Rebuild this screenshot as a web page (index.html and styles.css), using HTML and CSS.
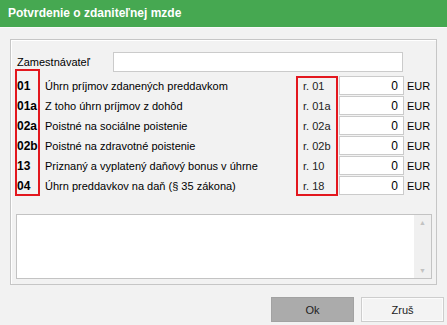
FILE: index.html
```html
<!DOCTYPE html>
<html lang="sk">
<head>
  <meta charset="UTF-8" />
  <title>Potvrdenie o zdaniteľnej mzde</title>
  <link rel="stylesheet" href="styles.css">
</head>
<body>
  <div class="titlebar">Potvrdenie o zdaniteľnej mzde</div>

  <div class="panel">
    <div class="employer">
      <label class="employer-label">Zamestnávateľ</label>
      <div class="field employer-field"></div>
    </div>

    <div class="table">
      <div class="codes marked">
        <div class="row">01</div>
        <div class="row">01a</div>
        <div class="row">02a</div>
        <div class="row">02b</div>
        <div class="row">13</div>
        <div class="row">04</div>
      </div>
      <div class="descs">
        <div class="row">Úhrn príjmov zdanených preddavkom</div>
        <div class="row">Z toho úhrn príjmov z dohôd</div>
        <div class="row">Poistné na sociálne poistenie</div>
        <div class="row">Poistné na zdravotné poistenie</div>
        <div class="row">Priznaný a vyplatený daňový bonus v úhrne</div>
        <div class="row">Úhrn preddavkov na daň (§ 35 zákona)</div>
      </div>
      <div class="refs marked">
        <div class="row">r. 01</div>
        <div class="row">r. 01a</div>
        <div class="row">r. 02a</div>
        <div class="row">r. 02b</div>
        <div class="row">r. 10</div>
        <div class="row">r. 18</div>
      </div>
      <div class="values">
        <div class="field value">0</div>
        <div class="field value">0</div>
        <div class="field value">0</div>
        <div class="field value">0</div>
        <div class="field value">0</div>
        <div class="field value">0</div>
      </div>
      <div class="units">
        <div class="row">EUR</div>
        <div class="row">EUR</div>
        <div class="row">EUR</div>
        <div class="row">EUR</div>
        <div class="row">EUR</div>
        <div class="row">EUR</div>
      </div>
    </div>

    <div class="memo">
      <div class="memo-text"></div>
      <div class="scrollbar">
        <span class="arrow">&#9650;</span>
        <span class="arrow">&#9660;</span>
      </div>
    </div>
  </div>

  <div class="buttons">
    <button class="btn btn-ok">Ok</button>
    <button class="btn">Zruš</button>
  </div>
</body>
</html>
```

FILE: styles.css
```css
body {
  margin: 0;
  width: 447px;
  height: 325px;
  background: #f2f2f2;
  font-family: 'Liberation Sans', Arial, sans-serif;
  font-size: 11px;
  color: #000;
  overflow: hidden;
}
.titlebar {
  height: 27px;
  line-height: 26px;
  padding-left: 8px;
  background: #46a851;
  color: #fff;
  font-weight: bold;
  font-size: 12px;
  border-bottom: 1px solid #fafafa;
}
.panel {
  margin: 11px 0 0 10px;
  width: 417px;
  padding: 12px 4px 5px 4px;
  border: 1px solid #c6c6c6;
  box-shadow: inset 1px 1px 0 #fff;
}
.employer {
  display: flex;
  align-items: center;
  height: 20px;
}
.employer-label {
  width: 96px;
  padding-left: 2px;
}
.field {
  box-sizing: border-box;
  background: #fff;
  border: 1px solid #cbcbcb;
}
.employer-field {
  width: 290px;
  height: 20px;
}
.table {
  display: flex;
  margin-top: 4px;
}
.row {
  height: 20px;
  line-height: 20px;
  white-space: nowrap;
}
.marked {
  box-shadow: inset 0 0 0 2px #e3171e;
}
.codes {
  width: 23px;
  margin-top: -7px;
  padding: 7px 0 0 2px;
  font-weight: bold;
  font-size: 12px;
}
.descs {
  width: 251px;
  margin-left: 5px;
}
.refs {
  box-sizing: border-box;
  width: 42px;
  padding-left: 7px;
  color: #222;
}
.values {
  width: 65px;
  margin-left: 1px;
}
.value {
  height: 19px;
  margin-bottom: 1px;
  line-height: 18px;
  text-align: right;
  padding-right: 5px;
  font-size: 12px;
}
.units {
  padding-left: 3px;
}
.memo {
  display: flex;
  margin: 18px 0 0 1px;
  width: 416px;
  height: 65px;
  box-sizing: border-box;
  border: 1px solid #c3c3c3;
  background: #fff;
}
.memo-text {
  flex: 1;
}
.scrollbar {
  width: 17px;
  background: #f0f0f0;
  display: flex;
  flex-direction: column;
  justify-content: space-between;
  align-items: center;
  padding: 4px 0;
}
.arrow {
  font-size: 7px;
  color: #c2c2c2;
}
.buttons {
  display: flex;
  justify-content: flex-end;
  gap: 7px;
  margin: 12px 3px 0 0;
}
.btn {
  width: 83px;
  height: 25px;
  font-family: 'Liberation Sans', Arial, sans-serif;
  font-size: 11px;
  color: #222;
  background: #f3f3f3;
  border: 1px solid #cdcdcd;
  box-shadow: inset 0 0 0 1px #fbfbfb;
}
.btn-ok {
  background: #ababab;
  border-color: #a2a2a2;
  box-shadow: none;
}
```
